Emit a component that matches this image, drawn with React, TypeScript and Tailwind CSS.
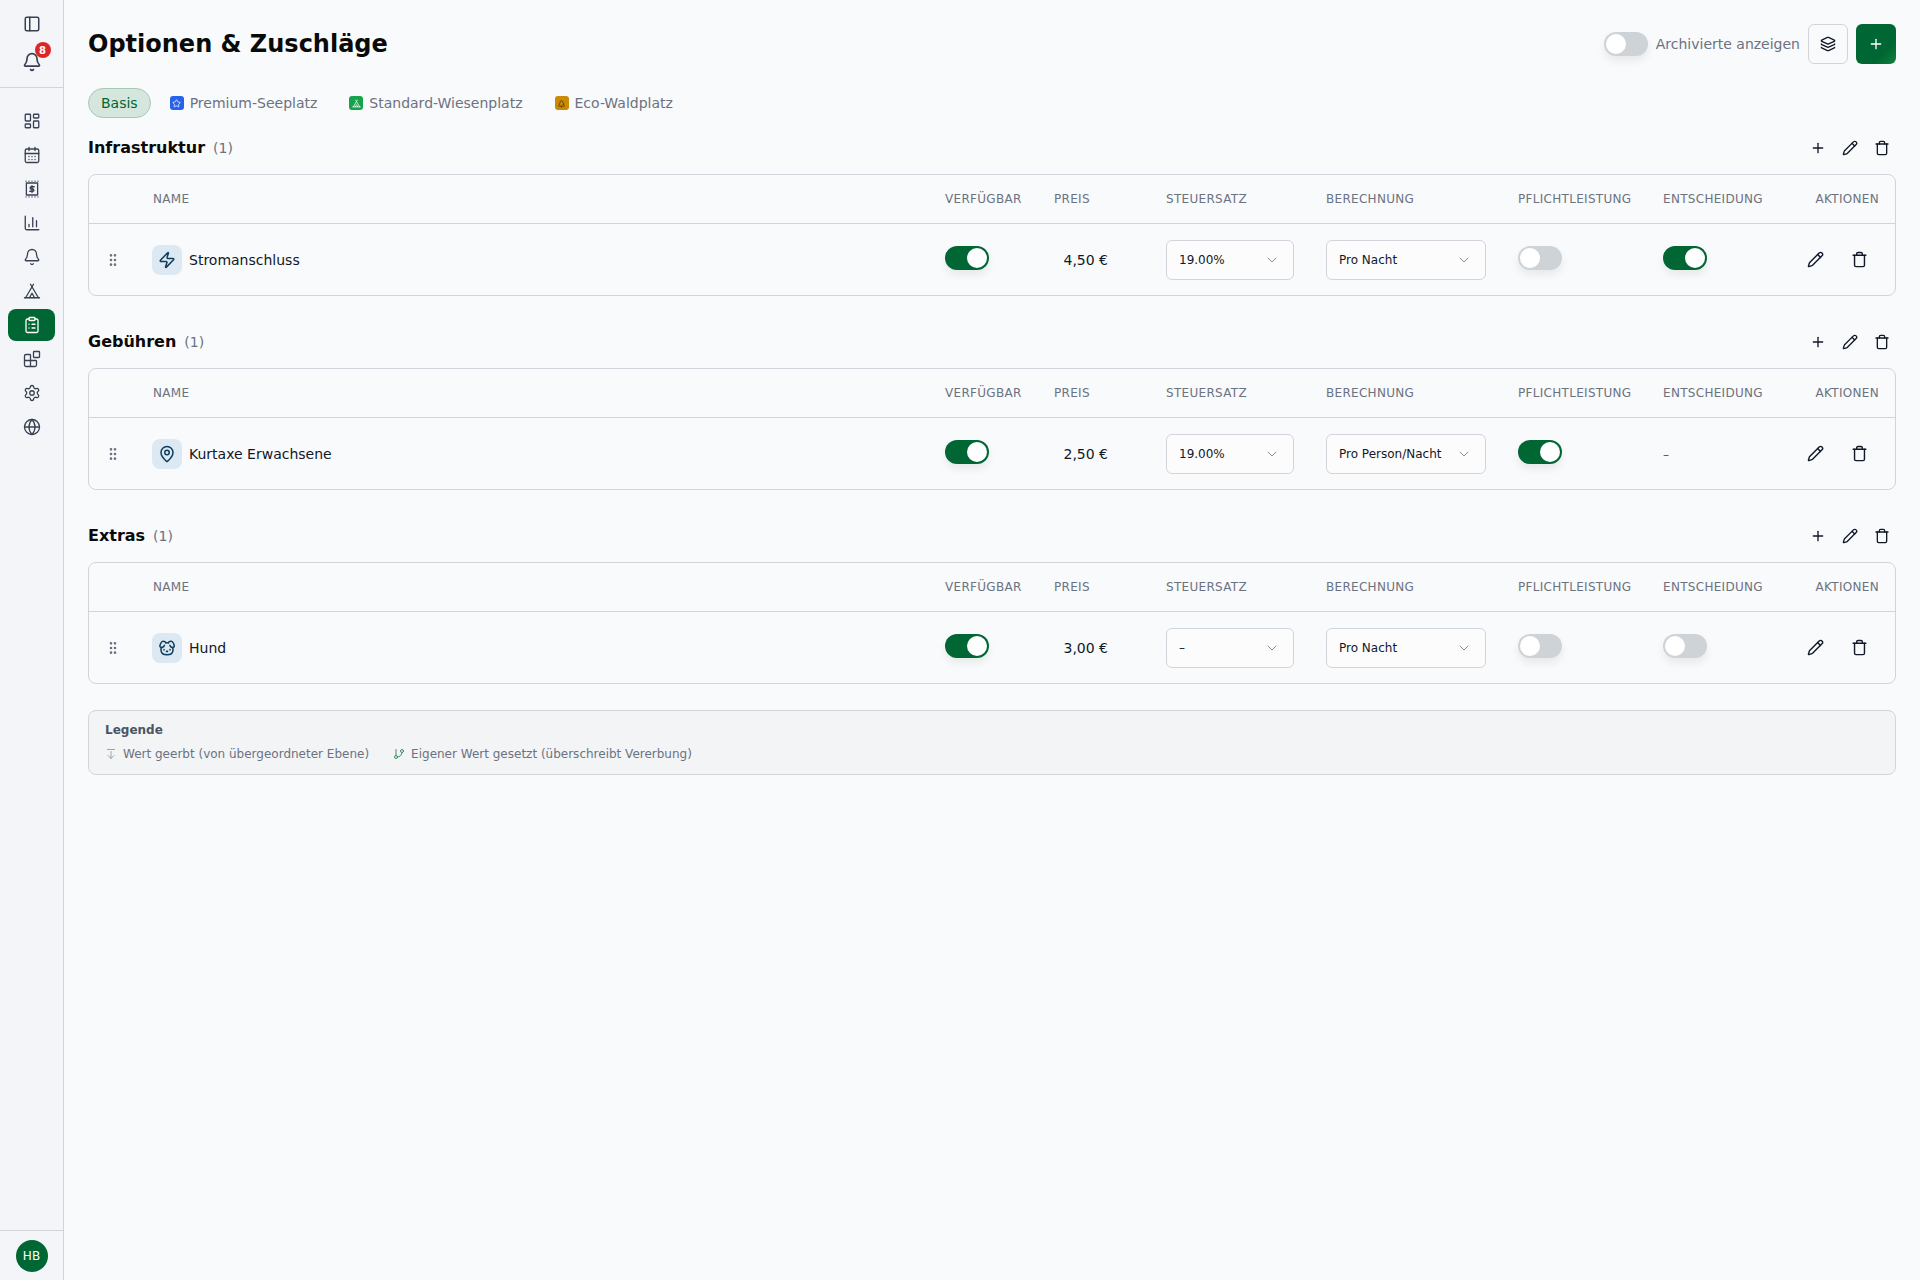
import { useState } from 'react'
import {
  ArrowDownFromLine,
  Bell,
  Blocks,
  CalendarDays,
  ChartColumn,
  ChevronDown,
  ClipboardList,
  Dog,
  GitBranch,
  Globe,
  GripVertical,
  LayoutDashboard,
  Layers,
  MapPin,
  PanelLeft,
  Pencil,
  Plus,
  Settings,
  Star,
  Tent,
  Trash,
  TreePine,
  Zap,
  type LucideIcon,
} from 'lucide-react'

const GREEN = 'bg-[#006633]'
const GRID = 'grid grid-cols-[48px_792px_109px_112px_160px_192px_145px_132px_1fr] items-center'

function ReceiptIcon() {
  return (
    <svg width="18" height="18" viewBox="0 0 24 24" fill="none" stroke="currentColor" strokeWidth="1.75" strokeLinecap="round" strokeLinejoin="round">
      <rect x="4.5" y="4" width="15" height="16" />
      <path d="M4 1.5h.01M8 1.5h.01M12 1.5h.01M16 1.5h.01M20 1.5h.01M4 22.5h.01M8 22.5h.01M12 22.5h.01M16 22.5h.01M20 22.5h.01" />
      <path d="M15 9h-4a1.5 1.5 0 0 0 0 3h2a1.5 1.5 0 0 1 0 3H9M12 7.5v9" />
    </svg>
  )
}

function Toggle({ on }: { on: boolean }) {
  return (
    <span className={`flex h-6 w-11 -translate-y-0.5 items-center rounded-full p-0.5 shadow-[0_5px_8px_rgba(0,0,0,0.07)] ${on ? `${GREEN} justify-end` : 'justify-start bg-[#ced3d7]'}`}>
      <span className="h-5 w-5 rounded-full bg-white" />
    </span>
  )
}

function SelectBox({ value, width }: { value: string; width: string }) {
  return (
    <div className={`flex h-10 items-center justify-between rounded-md border border-[#d1d5db] bg-[#fcfcfd] pl-3 pr-[13px] text-xs text-[#111827] ${width}`}>
      <span>{value}</span>
      <ChevronDown size={16} strokeWidth={1.5} className="text-[#8b929c]" />
    </div>
  )
}

interface OptionRow {
  name: string
  icon: LucideIcon
  price: string
  tax: string
  calc: string
  required: boolean
  decision: boolean | null
}

function Section({ title, row, first }: { title: string; row: OptionRow; first?: boolean }) {
  const RowIcon = row.icon
  return (
    <section className={first ? 'mt-4' : 'mt-8'}>
      <div className="mb-3 flex h-7 items-center justify-between">
        <h2 className="flex items-center gap-2 text-base font-bold text-[#0a0a0a]">
          {title}
          <span className="text-sm font-normal text-[#6b7280]">(1)</span>
        </h2>
        <div className="flex items-center gap-1 text-[#111827]">
          <button type="button" className="flex h-7 w-7 items-center justify-center"><Plus size={16} /></button>
          <button type="button" className="flex h-7 w-7 items-center justify-center"><Pencil size={16} /></button>
          <button type="button" className="flex h-7 w-7 items-center justify-center"><Trash size={16} /></button>
        </div>
      </div>
      <div className="rounded-lg border border-[#d1d5db]">
        <div className={`${GRID} h-[49px] border-b border-[#d1d5db] text-xs uppercase tracking-wide text-[#6b7280]`}>
          <span />
          <span className="pl-4">Name</span>
          <span className="pl-4">Verfügbar</span>
          <span className="pl-4">Preis</span>
          <span className="pl-4">Steuersatz</span>
          <span className="pl-4">Berechnung</span>
          <span className="pl-4">Pflichtleistung</span>
          <span className="pl-4">Entscheidung</span>
          <span className="pr-4 text-right">Aktionen</span>
        </div>
        <div className={`${GRID} h-[71px] text-sm text-[#111827]`}>
          <span className="flex justify-center text-[#6b7280]"><GripVertical size={16} /></span>
          <div className="flex items-center gap-[7px] pl-[15px]">
            <span className="flex h-[30px] w-[30px] items-center justify-center rounded-lg bg-[#dce9f2] text-[#0f3d5c]">
              <RowIcon size={18} />
            </span>
            {row.name}
          </div>
          <div className="pl-4"><Toggle on /></div>
          <div className="pl-4"><span className="block w-[54px] whitespace-nowrap text-right">{row.price}</span></div>
          <div className="pl-4"><SelectBox value={row.tax} width="w-32" /></div>
          <div className="pl-4"><SelectBox value={row.calc} width="w-40" /></div>
          <div className="pl-4"><Toggle on={row.required} /></div>
          <div className="pl-4">
            {row.decision === null ? <span className="text-xs text-[#4b5563]">–</span> : <Toggle on={row.decision} />}
          </div>
          <div className="flex items-center justify-end gap-1 pr-4">
            <button type="button" className="flex h-10 w-10 items-center justify-center"><Pencil size={17} /></button>
            <button type="button" className="flex h-10 w-10 items-center justify-center"><Trash size={17} /></button>
          </div>
        </div>
      </div>
    </section>
  )
}

const navIcons: LucideIcon[] = [LayoutDashboard, CalendarDays]
const navIconsAfter: LucideIcon[] = [ChartColumn, Bell, Tent, ClipboardList, Blocks, Settings, Globe]

const sections: { title: string; row: OptionRow }[] = [
  { title: 'Infrastruktur', row: { name: 'Stromanschluss', icon: Zap, price: '4,50 €', tax: '19.00%', calc: 'Pro Nacht', required: false, decision: true } },
  { title: 'Gebühren', row: { name: 'Kurtaxe Erwachsene', icon: MapPin, price: '2,50 €', tax: '19.00%', calc: 'Pro Person/Nacht', required: true, decision: null } },
  { title: 'Extras', row: { name: 'Hund', icon: Dog, price: '3,00 €', tax: '–', calc: 'Pro Nacht', required: false, decision: false } },
]

export default function App() {
  const [activeTab] = useState('Basis')

  return (
    <div className="flex min-h-screen bg-[#f9fafc] font-['DejaVu_Sans',sans-serif]">
      <aside className="flex w-16 shrink-0 flex-col border-r border-[#d1d5db] bg-[#f4f5f9] text-[#374151]">
        <div className="flex h-[88px] flex-col items-center gap-[19px] border-b border-[#d1d5db] pt-[15px]">
          <PanelLeft size={18} />
          <div className="relative">
            <Bell size={20} />
            <span className="absolute -right-[9px] -top-[10px] flex h-4 w-4 items-center justify-center rounded-full bg-[#dc2626] text-[10px] font-bold text-white">8</span>
          </div>
        </div>
        <nav className="flex flex-1 flex-col gap-0.5 px-2 pt-[17px]">
          {navIcons.map((Icon, i) => (
            <span key={i} className="flex h-8 items-center justify-center"><Icon size={18} strokeWidth={1.75} /></span>
          ))}
          <span className="flex h-8 items-center justify-center"><ReceiptIcon /></span>
          {navIconsAfter.map((Icon, i) => (
            <span key={i} className={`flex h-8 items-center justify-center rounded-lg ${Icon === ClipboardList ? `${GREEN} text-white` : ''}`}>
              <Icon size={18} strokeWidth={1.75} />
            </span>
          ))}
        </nav>
        <div className="flex h-[50px] items-center justify-center border-t border-[#d1d5db]">
          <span className={`flex h-8 w-8 items-center justify-center rounded-full text-xs text-white ${GREEN}`}>HB</span>
        </div>
      </aside>

      <main className="min-w-0 flex-1 px-6 pt-6">
        <header className="flex h-10 items-center justify-between">
          <h1 className="text-2xl font-bold text-[#0a0a0a]">Optionen &amp; Zuschläge</h1>
          <div className="flex items-center gap-2">
            <span className="translate-y-0.5"><Toggle on={false} /></span>
            <span className="text-sm text-[#6b7280]">Archivierte anzeigen</span>
            <button type="button" className="flex h-10 w-10 items-center justify-center rounded-md border border-[#d1d5db] text-[#111827]"><Layers size={16} /></button>
            <button type="button" className="flex h-10 w-10 items-center justify-center rounded-md bg-linear-to-br from-[#006633] from-70% to-[#15803d] text-white"><Plus size={16} /></button>
          </div>
        </header>

        <div className="mt-6 flex h-[30px] items-center text-sm text-[#6b7280]">
          <span className={`mr-[3px] flex h-[30px] items-center rounded-full border border-[#a5c9b4] bg-[#d5e6dc] px-3 text-[#006633] ${activeTab === 'Basis' ? '' : 'hidden'}`}>Basis</span>
          <span className="flex items-center gap-1.5 px-4">
            <span className="flex h-3.5 w-3.5 items-center justify-center rounded-[3px] bg-[#2563eb] text-white"><Star size={9} /></span>
            Premium-Seeplatz
          </span>
          <span className="flex items-center gap-1.5 px-4">
            <span className="flex h-3.5 w-3.5 items-center justify-center rounded-[3px] bg-[#16a34a] text-white"><Tent size={9} /></span>
            Standard-Wiesenplatz
          </span>
          <span className="flex items-center gap-1.5 px-4">
            <span className="flex h-3.5 w-3.5 items-center justify-center rounded-[3px] bg-[#ca8a04] text-[#4a3303]"><TreePine size={9} /></span>
            Eco-Waldplatz
          </span>
        </div>

        {sections.map((section, i) => (
          <Section key={section.title} title={section.title} row={section.row} first={i === 0} />
        ))}

        <div className="mt-[26px] rounded-lg border border-[#d1d5db] bg-[#f3f4f6] px-4 pb-3 pt-[11px] text-xs text-[#6b7280]">
          <p className="font-bold text-[#4b5563]">Legende</p>
          <div className="mt-2 flex items-center gap-6">
            <span className="flex items-center gap-1.5">
              <ArrowDownFromLine size={12} className="text-[#9ca3af]" />
              Wert geerbt (von übergeordneter Ebene)
            </span>
            <span className="flex items-center gap-1.5">
              <GitBranch size={12} className="text-[#3f8f63]" />
              Eigener Wert gesetzt (überschreibt Vererbung)
            </span>
          </div>
        </div>
      </main>
    </div>
  )
}
